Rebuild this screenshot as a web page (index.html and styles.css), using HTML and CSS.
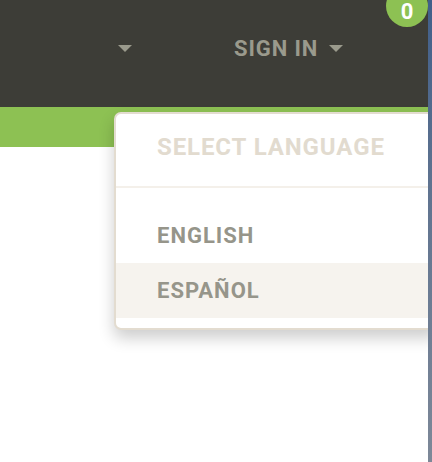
FILE: index.html
```html
<!DOCTYPE html>
<html>
<head>
<meta charset="utf-8">
<link rel="stylesheet" href="styles.css">
</head>
<body>
<div class="page">
  <div class="main">
    <header class="topbar">
      <div class="nav">
        <div class="nav-item nav-first"><span class="caret"></span></div>
        <div class="nav-item nav-signin">SIGN IN <span class="caret"></span></div>
      </div>
      <span class="badge">0</span>
    </header>
    <div class="greenbar"></div>
    <div class="dropdown">
      <div class="dd-title">SELECT LANGUAGE</div>
      <ul class="dd-list">
        <li class="dd-item">ENGLISH</li>
        <li class="dd-item active">ESPAÑOL</li>
      </ul>
    </div>
  </div>
  <div class="edge"></div>
</div>
</body>
</html>
```

FILE: styles.css
```css
html, body {
  margin: 0;
  padding: 0;
  height: 100%;
}
body {
  font-family: Roboto, "Liberation Sans", Arial, sans-serif;
  background: #fff;
  overflow: hidden;
}
.page {
  display: flex;
  height: 462px;
}
.main {
  position: relative;
  flex: 1;
  background: #fff;
  overflow: hidden;
}
.edge {
  position: relative;
  z-index: 2;
  width: 4px;
  background: linear-gradient(#405f8a, #5f7390 40%, #7d8898);
}
.topbar {
  position: relative;
  height: 107px;
  background: #3d3d37;
}
.nav {
  display: flex;
  align-items: center;
  height: 96px;
  padding-left: 118px;
}
.nav-item {
  display: flex;
  align-items: center;
  color: #9a9a8c;
  font-weight: 700;
  font-size: 22px;
  letter-spacing: 0.9px;
}
.nav-signin {
  margin-left: 102px;
}
.caret {
  display: inline-block;
  width: 0;
  height: 0;
  border-left: 7.5px solid transparent;
  border-right: 7.5px solid transparent;
  border-top: 7px solid #9a9a8c;
}
.nav-signin .caret {
  margin-left: 11px;
}
.badge {
  position: absolute;
  right: 0;
  top: -15px;
  width: 42px;
  height: 42px;
  border-radius: 50%;
  background: #8dc153;
  color: #fff;
  font-weight: 700;
  font-size: 22px;
  line-height: 22px;
  display: flex;
  align-items: flex-end;
  justify-content: center;
  box-sizing: border-box;
  padding-bottom: 4px;
}
.greenbar {
  height: 40px;
  background: #8dc153;
}
.dropdown {
  position: absolute;
  left: 114px;
  top: 112px;
  right: -10px;
  background: #fff;
  border: 2px solid #e3dcd0;
  border-radius: 7px;
  box-shadow: 0 8px 16px rgba(0, 0, 0, 0.2);
}
.dd-title {
  height: 74px;
  box-sizing: border-box;
  padding: 19px 0 0 41px;
  color: #e2dbcf;
  font-weight: 700;
  font-size: 24px;
  line-height: 28px;
  letter-spacing: 0.9px;
  border-bottom: 2px solid #f4f0ea;
}
.dd-list {
  list-style: none;
  margin: 0;
  padding: 20px 0 10px;
}
.dd-item {
  height: 55px;
  display: flex;
  align-items: center;
  padding-left: 41px;
  color: #96958a;
  font-weight: 700;
  font-size: 22px;
  letter-spacing: 1px;
}
.dd-item.active {
  background: #f6f3ee;
}
```
